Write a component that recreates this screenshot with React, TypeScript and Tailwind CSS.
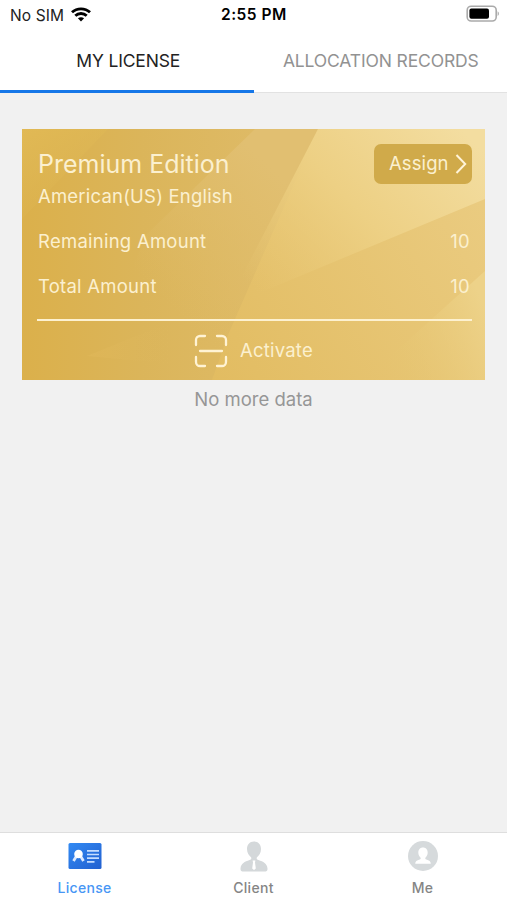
import React, { useState } from 'react';

const tabs = ['MY LICENSE', 'ALLOCATION RECORDS'];

const StatusBar = () => (
  <div className="relative flex h-[30px] items-center justify-between pl-[10px] pr-[7px] text-black">
    <div className="flex items-center gap-[7px]">
      <span className="pt-px text-[15.5px] leading-[30px] tracking-[0.1px] text-[#222]">No SIM</span>
      <svg width="20" height="15" viewBox="0 0 20 15" fill="none" stroke="#000" strokeWidth="2.9" className="-mt-px">
        <path d="M1 5.3C6 .7 14 .7 19 5.3" />
        <path d="M4.3 8.8c3.2-3 8.2-3 11.4 0" />
        <path d="M10 14.4 6.9 11.3c1.8-1.5 4.4-1.5 6.2 0z" fill="#000" stroke="none" />
      </svg>
    </div>
    <span className="absolute left-[221px] text-[15.5px] font-semibold leading-[30px] tracking-[0.5px]">2:55 PM</span>
    <svg width="34" height="17" viewBox="0 0 34 17" className="-mt-[3px]">
      <rect x="1.2" y="1.2" width="29" height="14.8" rx="4" fill="none" stroke="#aaa" strokeWidth="1.6" />
      <rect x="3.4" y="3.4" width="19.6" height="10.4" rx="2" fill="#000" />
      <path d="M31.6 6.2c1.8.8 1.8 4 0 4.8z" fill="#aaa" />
    </svg>
  </div>
);

// Gold facets behind the card text
const CardArt = () => (
  <svg className="absolute inset-0 h-full w-full" viewBox="0 0 463 251" preserveAspectRatio="none">
    <defs>
      <linearGradient id="base" x1="0" y1="0" x2="300" y2="0" gradientUnits="userSpaceOnUse">
        <stop offset="0" stopColor="#dbb04b" />
        <stop offset=".4" stopColor="#dbb55a" />
        <stop offset="1" stopColor="#e0bd6c" />
      </linearGradient>
      <linearGradient id="corner" x1="0" y1="0" x2="50" y2="75" gradientUnits="userSpaceOnUse">
        <stop offset="0" stopColor="#e1b955" />
        <stop offset="1" stopColor="#dfb956" stopOpacity="0" />
      </linearGradient>
      <linearGradient id="wedge" x1="250" y1="40" x2="130" y2="160" gradientUnits="userSpaceOnUse">
        <stop offset="0" stopColor="#e1bf71" />
        <stop offset="1" stopColor="#dfbb66" stopOpacity="0" />
      </linearGradient>
      <linearGradient id="right" x1="190" y1="251" x2="463" y2="80" gradientUnits="userSpaceOnUse">
        <stop offset="0" stopColor="#e2bc61" />
        <stop offset="1" stopColor="#eacb80" />
      </linearGradient>
      <linearGradient id="bright" x1="250" y1="180" x2="440" y2="0" gradientUnits="userSpaceOnUse">
        <stop offset="0" stopColor="#e9c874" stopOpacity="0" />
        <stop offset=".5" stopColor="#edd084" />
        <stop offset="1" stopColor="#f3dda0" />
      </linearGradient>
      <linearGradient id="bottom" x1="350" y1="225" x2="463" y2="180" gradientUnits="userSpaceOnUse">
        <stop offset="0" stopColor="#e5c36c" stopOpacity="0" />
        <stop offset="1" stopColor="#edd289" />
      </linearGradient>
      <linearGradient id="flare" x1="65" y1="0" x2="150" y2="0" gradientUnits="userSpaceOnUse">
        <stop offset="0" stopColor="#e3ba5c" />
        <stop offset="1" stopColor="#deb960" stopOpacity="0" />
      </linearGradient>
    </defs>
    <rect width="463" height="251" fill="url(#base)" />
    <path d="M0 0h86L0 90z" fill="url(#corner)" />
    <path d="M233 0h63l-106 251H60L125 105z" fill="url(#wedge)" />
    <path d="M65 227 205 170 190 239z" fill="url(#flare)" opacity=".4" />
    <path d="M296 0h167v251H190L206 206z" fill="url(#right)" />
    <path d="M296 0h167v70L206 177l2-7z" fill="url(#bright)" />
    <path d="M463 142v109H342z" fill="url(#bottom)" />
  </svg>
);

const LicenseCard = () => (
  <div className="relative mx-[22px] mt-[36px] h-[251px] w-[463px] overflow-hidden text-[#fbf0cf]">
    <CardArt />
    <div className="relative flex h-full flex-col px-[15px] pt-[15px]">
      <div className="flex justify-between">
        <div>
          <h2 className="pl-px text-[25px] leading-[41px]">Premium Edition</h2>
          <p className="pl-px text-[18.5px] leading-[22px] tracking-[0.2px]">American(US) English</p>
        </div>
        <button className="-mr-[2px] flex h-[40px] w-[98px] items-center rounded-[7px] bg-[#d0aa4a] pl-[15px]">
          <span className="text-[18.5px] tracking-[0.1px]">Assign</span>
          <svg width="12" height="20" viewBox="0 0 12 20" fill="none" stroke="#fff4d9" strokeWidth="2" className="ml-[6px] shrink-0">
            <path d="m1.5 1 8.7 9-8.7 9" />
          </svg>
        </button>
      </div>
      <div className="mt-[22px] flex justify-between pl-px text-[18.5px] leading-[24px] tracking-[0.25px]">
        <span>Remaining Amount</span>
        <span>10</span>
      </div>
      <div className="mt-[21px] flex justify-between pl-px text-[18.5px] leading-[24px] tracking-[0.25px]">
        <span>Total Amount</span>
        <span>10</span>
      </div>
      <div className="-mr-[2px] mt-[21px] h-[2px] shrink-0 bg-[#fdf1d0]" />
      <button className="mt-[13px] flex items-center justify-center gap-[12px]">
        <svg width="34" height="34" viewBox="0 0 34 34" fill="none" stroke="#fff3d4" strokeWidth="2.3" strokeLinecap="round">
          <path d="M2 11V6a4 4 0 0 1 4-4h5M23 2h5a4 4 0 0 1 4 4v5M32 23v5a4 4 0 0 1-4 4h-5M11 32H6a4 4 0 0 1-4-4v-5M6 17h22" />
        </svg>
        <span className="text-[18.5px] tracking-[0.2px]">Activate</span>
      </button>
    </div>
  </div>
);

const LicenseIcon = () => (
  <svg width="34" height="28" viewBox="0 0 34 28">
    <defs>
      <linearGradient id="lic" x1="0" y1="0" x2="1" y2="1">
        <stop offset="0" stopColor="#328af3" />
        <stop offset="1" stopColor="#2260d0" />
      </linearGradient>
    </defs>
    <rect x=".5" y="1" width="33" height="26" rx="1.5" fill="url(#lic)" />
    <path d="m8.5 14-3 5M12.500 14l3 5" stroke="#dceaff" strokeWidth="2.8" />
    <circle cx="10.5" cy="12" r="4.3" fill="#fff" />
    <path d="M19 8.8h12M19 12.5h12M19 16.2h12M19 19.8h7.5" stroke="#c5ddff" strokeWidth="1.7" />
  </svg>
);

const ClientIcon = () => (
  <svg width="28" height="31" viewBox="0 0 28 31">
    <path
      d="M14 .5c4.5 0 7 3.2 7 7.5 0 4-2 6.4-4 8.3-.8 1.2-.2 2.2 1.4 2.8 5 1.8 8.6 3.2 9.1 8.4.2 2-1 3-3 3h-21c-2 0-3.2-1-3-3 .5-5.2 4.1-6.6 9.1-8.4 1.6-.6 2.2-1.6 1.4-2.8-2-1.9-4-4.3-4-8.3C7 3.7 9.500.5 14 .5z"
      fill="#d4d8da"
    />
    <path d="M12.600 19.500h2.800l-.4 2 .8 6-1.800 1.400-1.800-1.400.8-6z" fill="#fff" />
  </svg>
);

const MeIcon = () => (
  <svg width="30" height="30" viewBox="0 0 30 30">
    <circle cx="15" cy="15" r="15" fill="#d6dadc" />
    <path
      d="M15 6.5c3 0 4.700 2.200 4.700 5 0 2.500-1.100 4-2.300 5.200-.4.800 0 1.400.9 1.700 2.900.9 4.500 1.700 4.500 4.300H7.200c0-2.600 1.600-3.400 4.500-4.300.9-.3 1.300-.9.9-1.700-1.200-1.200-2.300-2.700-2.300-5.200 0-2.800 1.700-5 4.700-5z"
      fill="#fff"
    />
  </svg>
);

const navItems = [
  { name: 'License', icon: <LicenseIcon /> },
  { name: 'Client', icon: <ClientIcon /> },
  { name: 'Me', icon: <MeIcon /> },
];

const App = () => {
  const [tab, setTab] = useState(0);
  const [nav, setNav] = useState('License');

  return (
    <div className="flex h-[900px] w-[507px] flex-col overflow-hidden bg-[#f1f1f1] font-['Inter',sans-serif]">
      <header className="h-[93px] shrink-0 border-b border-[#e2e2e2] bg-white">
        <StatusBar />
        <div className="flex h-[63px]">
          {tabs.map((label, i) => (
            <button
              key={label}
              onClick={() => setTab(i)}
              className={`h-full w-1/2 border-b-[3px] pt-px text-[17.5px] leading-[60px] tracking-[-0.15px] ${
                tab === i ? 'border-[#1677e8] pl-[3px] text-[#222]' : 'border-transparent pl-px text-[#929292]'
              }`}
            >
              {label}
            </button>
          ))}
        </div>
      </header>

      <main className="flex-1">
        <LicenseCard />
        <p className="mt-[6px] text-center text-[18.5px] leading-[26px] text-[#969696]">No more data</p>
      </main>

      <nav className="flex h-[68px] shrink-0 border-t border-[#dedede] bg-white">
        {navItems.map((item) => (
          <button key={item.name} onClick={() => setNav(item.name)} className="flex flex-1 flex-col items-center pt-[7px]">
            <div className="flex h-[32px] items-center">{item.icon}</div>
            <span
              className={`mt-[6px] text-[14px] font-medium leading-[20px] tracking-[0.3px] ${
                nav === item.name ? 'text-[#4796f5]' : 'text-[#858585]'
              }`}
            >
              {item.name}
            </span>
          </button>
        ))}
      </nav>
    </div>
  );
};

export default App;
